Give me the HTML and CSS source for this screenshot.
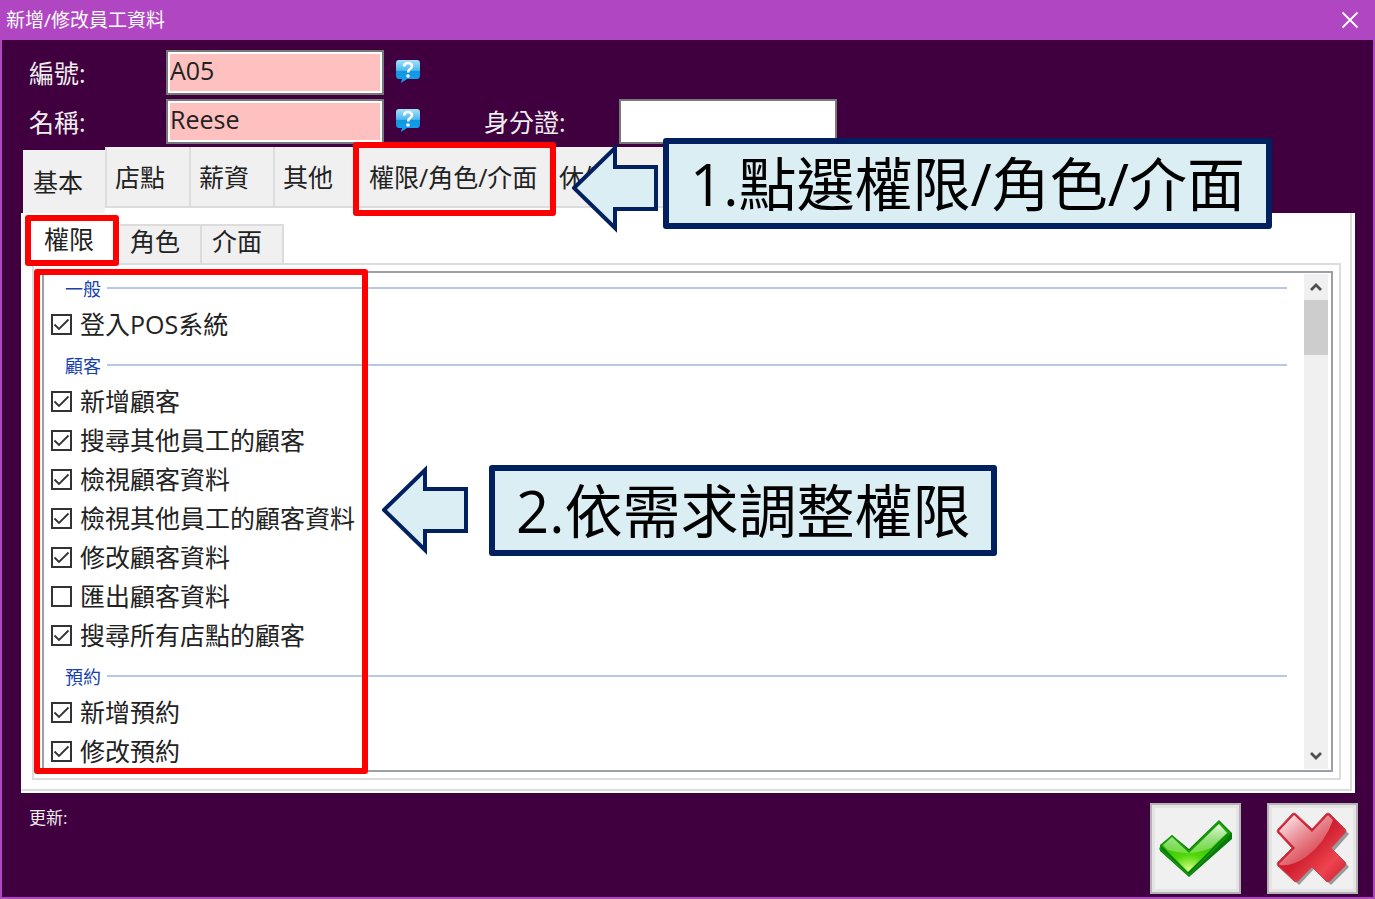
FILE: index.html
```html
<!DOCTYPE html>
<html lang="zh-Hant">
<head>
  <meta charset="UTF-8">
  <meta name="viewport" content="width=device-width, initial-scale=1.0">
  <title>新增/修改員工資料</title>
  <link rel="stylesheet" href="styles.css">
</head>
<body>
  <div class="window">
    <header class="title-bar">
      <h1>新增/修改員工資料</h1>
      <button class="close-btn" aria-label="關閉">
        <svg width="18" height="18" viewBox="0 0 18 18"><path d="M1.5 1.5l15 15M16.5 1.5l-15 15" stroke="#fff" stroke-width="1.8"/></svg>
      </button>
    </header>

    <svg width="0" height="0" class="defs">
      <defs>
        <linearGradient id="bubble" x1="0" y1="0" x2="0" y2="1">
          <stop offset="0" stop-color="#a5e2f8"/>
          <stop offset=".45" stop-color="#4db8ee"/>
          <stop offset=".5" stop-color="#1495e0"/>
          <stop offset="1" stop-color="#12a4f0"/>
        </linearGradient>
        <symbol id="help" viewBox="0 0 26 25">
          <path d="M4 1h18q3 0 3 3v12q0 4-3 4H12l-6 4 1-4H4q-3 0-3-4V4q0-3 3-3z" fill="url(#bubble)"/>
          <path d="M9 7.500Q9.500 4 13 4t4 3q0 2-2 3.200-1.800 1-1.800 3.300" fill="none" stroke="#fff" stroke-width="2.600"/>
          <circle cx="13" cy="17" r="1.800" fill="#fff"/>
        </symbol>
      </defs>
    </svg>

    <div class="form">
      <label for="emp-no">編號:</label>
      <input type="text" id="emp-no" class="required" value="A05">
      <button class="help-btn" aria-label="編號說明"><svg width="26" height="25"><use href="#help"/></svg></button>

      <label for="emp-name" class="row-start">名稱:</label>
      <input type="text" id="emp-name" class="required" value="Reese">
      <button class="help-btn" aria-label="名稱說明"><svg width="26" height="25"><use href="#help"/></svg></button>
      <label for="emp-id">身分證:</label>
      <input type="text" id="emp-id">
    </div>

    <nav class="tabs">
      <button class="tab tab-first">基本</button>
      <div class="tab-strip">
        <button class="tab">店點</button>
        <button class="tab">薪資</button>
        <button class="tab">其他</button>
        <button class="tab tab-wide">權限/角色/介面<span class="mark mark-tab"></span></button>
        <button class="tab tab-last">休假</button>
      </div>
    </nav>

    <main class="panel">
      <div class="panel-inner">
        <nav class="sub-tabs">
          <button class="sub-tab active">權限<span class="mark mark-sub"></span></button>
          <button class="sub-tab">角色</button>
          <button class="sub-tab">介面</button>
        </nav>
        <div class="sub-panel">
          <div class="list-box">
            <div class="list">
              <h2 class="group">一般</h2>
              <label class="item"><input type="checkbox" checked>登入POS系統</label>
              <h2 class="group">顧客</h2>
              <label class="item"><input type="checkbox" checked>新增顧客</label>
              <label class="item"><input type="checkbox" checked>搜尋其他員工的顧客</label>
              <label class="item"><input type="checkbox" checked>檢視顧客資料</label>
              <label class="item"><input type="checkbox" checked>檢視其他員工的顧客資料</label>
              <label class="item"><input type="checkbox" checked>修改顧客資料</label>
              <label class="item"><input type="checkbox">匯出顧客資料</label>
              <label class="item"><input type="checkbox" checked>搜尋所有店點的顧客</label>
              <h2 class="group">預約</h2>
              <label class="item"><input type="checkbox" checked>新增預約</label>
              <label class="item"><input type="checkbox" checked>修改預約</label>
            </div>
            <div class="scrollbar">
              <button aria-label="向上捲動"><svg width="12" height="10" viewBox="0 0 12 10"><path d="M1 8l5-5 5 5" fill="none" stroke="#505050" stroke-width="2.800"/></svg></button>
              <div class="thumb"></div>
              <button class="down" aria-label="向下捲動"><svg width="12" height="10" viewBox="0 0 12 10"><path d="M1 2l5 5 5-5" fill="none" stroke="#505050" stroke-width="2.800"/></svg></button>
            </div>
            <span class="mark mark-list"></span>
          </div>
        </div>
      </div>
    </main>

    <footer class="footer">
      <span>更新:</span>
      <div class="actions">
        <button class="action-btn" aria-label="確定">
          <svg width="76" height="76" viewBox="0 0 76 76">
            <defs>
              <radialGradient id="green" cx=".42" cy=".95" r=".7">
                <stop offset="0" stop-color="#d2ff80"/>
                <stop offset=".4" stop-color="#52d80c"/>
                <stop offset="1" stop-color="#22b400"/>
              </radialGradient>
              <linearGradient id="green-shine" x1="0" y1="0" x2="0" y2="1">
                <stop offset="0" stop-color="#fff" stop-opacity=".9"/>
                <stop offset="1" stop-color="#a0e878" stop-opacity=".5"/>
              </linearGradient>
            </defs>
            <path d="M2 34l12-10 17 14L61 9l13 13v6L31 66 2 40z" fill="#087a08"/>
            <path d="M3 34l11-10 17 16L61 10l10 11-41 40z" fill="url(#green)"/>
            <path d="M3 35l11-10 17 16L61 11l11 11-41 42L2 38z" fill="none" stroke="#159808" stroke-width="1.500"/>
            <path d="M5 34l9-8 17 16 30-29 8 9-16 15q-21 9-43 2z" fill="url(#green-shine)"/>
          </svg>
        </button>
        <button class="action-btn" aria-label="取消">
          <svg width="76" height="76" viewBox="0 0 76 76">
            <defs>
              <linearGradient id="red" x1="0" y1="0" x2="1" y2="1">
                <stop offset="0" stop-color="#cf2435"/>
                <stop offset=".5" stop-color="#d0202f"/>
                <stop offset=".75" stop-color="#ee4450"/>
                <stop offset="1" stop-color="#c81c2c"/>
              </linearGradient>
              <linearGradient id="red-shine" x1="0" y1="0" x2=".8" y2="1">
                <stop offset="0" stop-color="#fff"/>
                <stop offset="1" stop-color="#dc4a56" stop-opacity=".5"/>
              </linearGradient>
            </defs>
            <path d="M22 5l17 14L56 5l18 18-15 17 15 16-18 18-17-16-15 16L6 56l15-16L5 22z" fill="#999"/>
            <path d="M17 3q2-2 4 0l16 15L51 3q2-2 4 0l15 15q2 2 0 4L56 37l14 14q2 2 0 4L55 70q-2 2-4 0L37 56 23 70q-2 2-4 0L3 55q-2-2 0-4l14-14L3 22q-2-2 0-4z" fill="url(#red)" stroke="#c44a5c"/>
            <path d="M19 4l18 17L53 4l5 5Q50 32 31 46 16 56 5 54l-1-1 16-16L4 20z" fill="url(#red-shine)"/>
          </svg>
        </button>
      </div>
    </footer>

    <div class="callout callout-tab">
      <svg width="87" height="90" viewBox="0 0 87 90"><path d="M2 45L43 5v19h41v42H43v19z" fill="#daeef3" stroke="#002060" stroke-width="4"/></svg>
      <p>1.點選權限/角色/介面</p>
    </div>
    <div class="callout callout-list">
      <svg width="87" height="90" viewBox="0 0 87 90"><path d="M2 45L43 5v19h41v42H43v19z" fill="#daeef3" stroke="#002060" stroke-width="4"/></svg>
      <p>2.依需求調整權限</p>
    </div>
  </div>
</body>
</html>
```
FILE: styles.css
```css
* {
  box-sizing: border-box;
}

body {
  margin: 0;
  font-family: "Open Sans", "Noto Sans CJK TC", sans-serif;
  font-size: 25px;
  font-weight: 400;
  color: #222;
}

button, input {
  font: inherit;
  color: inherit;
}

button {
  border: none;
  padding: 0;
  background: none;
  cursor: pointer;
}

svg {
  display: block;
}

.defs {
  position: absolute;
}

.window {
  position: relative;
  display: flex;
  flex-direction: column;
  min-height: 100vh;
  border: 2px solid #b146c2;
  border-top: none;
  background-color: #400040;
  overflow: hidden;
}

.title-bar {
  display: flex;
  justify-content: space-between;
  align-items: center;
  height: 40px;
  padding: 0 14px 0 4px;
  background-color: #b146c2;
  color: #fff;
}

.title-bar h1 {
  margin: 0;
  font-size: 19px;
  font-weight: 400;
  line-height: 38px;
}

/* employee fields */
.form {
  display: grid;
  grid-template-columns: 137px 218px 100px 135px 218px;
  grid-auto-rows: 45px;
  row-gap: 4px;
  align-items: center;
  padding: 10px 0 3px 27px;
  color: #eee;
}

.form label {
  padding-bottom: 2px;
}

.row-start {
  grid-column: 1;
}

.form input {
  width: 100%;
  height: 45px;
  padding: 0 2px 5px;
  border: 2px solid #787878;
  background-color: #fff;
  color: #222;
}

.form input.required {
  background-color: #ffc0c0;
  box-shadow: inset 0 0 0 2px #fff;
}

.help-btn {
  justify-self: start;
  padding: 0 0 3px 11px;
}

/* main tabs */
.tabs {
  display: flex;
  height: 66px;
  padding-left: 21px;
}

.tab {
  position: relative;
  width: 84px;
  height: 61px;
  padding: 0 0 2px 8px;
  border-left: 2px solid #dcdcdc;
  border-bottom: 2px solid #dcdcdc;
  background-color: #f0f0f0;
  text-align: left;
  white-space: nowrap;
}

.tab-first {
  width: 82px;
  height: 63px;
  margin-top: 3px;
  padding-left: 10px;
  border: none;
}

.tab-strip {
  display: flex;
  background-color: #fff;
}

.tab-wide {
  width: 192px;
  padding-left: 10px;
}

.tab-last {
  width: 130px;
}

/* tab page */
.panel {
  flex: 1;
  display: flex;
  margin: 0 18px 0 19px;
  padding: 0 3px 2px 0;
  background-color: #fff;
}

.panel-inner {
  flex: 1;
  display: flex;
  flex-direction: column;
  padding: 11px 9px 9px 11px;
  border-right: 2px solid #dcdcdc;
  border-bottom: 2px solid #dcdcdc;
}

.sub-tabs {
  display: flex;
}

.sub-tab {
  position: relative;
  width: 82px;
  height: 39px;
  padding: 0 0 6px 10px;
  border: 2px solid #dcdcdc;
  border-left: none;
  border-bottom: none;
  background-color: #f0f0f0;
  line-height: 31px;
  text-align: left;
}

.sub-tab.active {
  width: 88px;
  padding: 0 0 8px 12px;
  border: none;
  background-color: #fff;
}

.sub-panel {
  flex: 1;
  display: flex;
  padding: 6px 6px 6px 8px;
  border: 2px solid #dcdcdc;
}

.list-box {
  position: relative;
  flex: 1;
  display: flex;
  border: 2px solid #9a9fa8;
}

.list {
  flex: 1;
  height: 495px;
  overflow: hidden;
}

.group {
  display: flex;
  align-items: center;
  gap: 6px;
  height: 38px;
  margin: 0 17px 0 21px;
  padding-top: 3px;
  color: #1540b0;
  font-size: 18px;
  font-weight: 400;
}

.group:first-child {
  height: 32px;
  padding: 0 0 2px;
}

.group::after {
  content: "";
  flex: 1;
  height: 2px;
  background-color: #b9c7e6;
}

.item {
  display: flex;
  align-items: center;
  gap: 8px;
  height: 39px;
  padding: 0 0 3px 7px;
}

.item input {
  appearance: none;
  width: 21px;
  height: 21px;
  margin: 3px 0 0;
  border: 2px solid #333;
  background-color: #fff;
}

.item input:checked {
  background-image: url("data:image/svg+xml,%3Csvg xmlns='http://www.w3.org/2000/svg' viewBox='0 0 17 17'%3E%3Cpath d='M1.500 8.500l4.500 4.500L15.500 3.500' fill='none' stroke='%23333' stroke-width='1.800'/%3E%3C/svg%3E");
}

.scrollbar {
  display: flex;
  flex-direction: column;
  width: 24px;
  margin: 1px 3px 1px 0;
  background-color: #f0f0f0;
}

.scrollbar button {
  display: grid;
  place-items: center;
  height: 26px;
}

.scrollbar .down {
  margin-top: auto;
}

.thumb {
  height: 55px;
  background-color: #cdcdcd;
}

/* footer */
.footer {
  display: flex;
  justify-content: space-between;
  height: 104px;
  padding: 10px 15px 0 27px;
  color: #eee;
  font-size: 17px;
  line-height: 30px;
}

.actions {
  display: flex;
  gap: 26px;
}

.action-btn {
  display: grid;
  place-items: center;
  width: 91px;
  height: 91px;
  border: 2px solid #b4b4b4;
  background-color: #f0f0f0;
  box-shadow: inset 0 0 0 3px #e4e4e4;
}

/* guide marks over the window */
.mark {
  position: absolute;
  z-index: 1;
  border: 6px solid #f00;
  border-radius: 3px;
  pointer-events: none;
}

.mark-tab {
  inset: -5px -7px -10px -6px;
}

.mark-sub {
  inset: -9px 1px -3px -7px;
}

.mark-list {
  top: -4px;
  bottom: -4px;
  left: -10px;
  width: 334px;
}

.callout {
  position: absolute;
  z-index: 2;
  display: flex;
  align-items: flex-start;
}

.callout p {
  margin: 0;
  padding: 0 21px;
  border: 6px solid #002060;
  border-radius: 3px;
  background-color: #daeef3;
  color: #000;
  font-size: 58px;
  line-height: 79px;
  white-space: nowrap;
}

.callout-tab {
  top: 138px;
  left: 570px;
  gap: 4px;
}

.callout-tab svg {
  margin-top: 5px;
}

.callout-list {
  top: 465px;
  left: 380px;
  gap: 20px;
}
```
